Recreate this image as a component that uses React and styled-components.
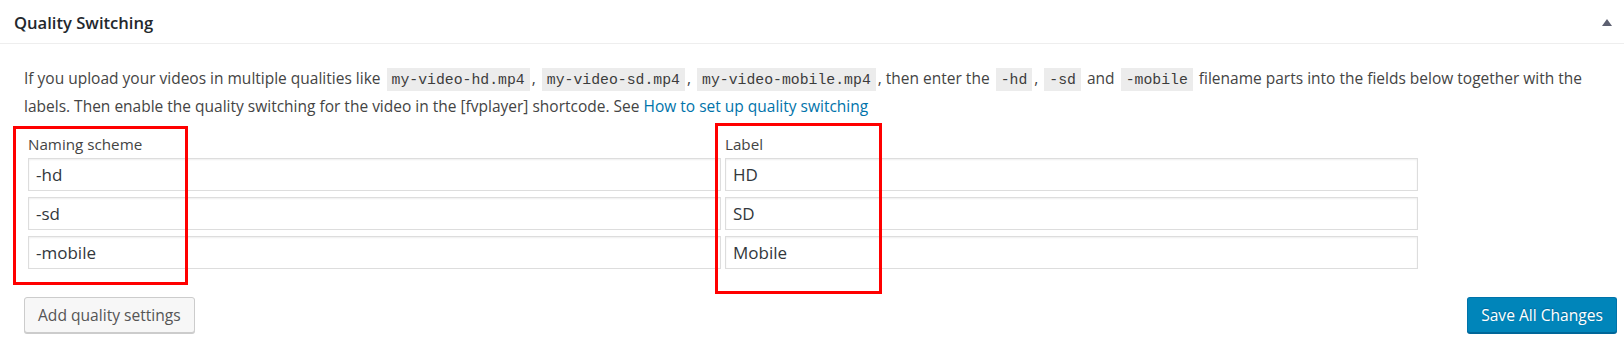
import React from "react";
import styled, { createGlobalStyle } from "styled-components";

const GlobalStyle = createGlobalStyle`
  html, body {
    margin: 0;
    padding: 0;
    background: #ffffff;
  }
  body {
    font-family: "Open Sans", "Noto Sans", sans-serif;
    color: #444;
  }
  * { box-sizing: border-box; }
`;

const Panel = styled.section`
  width: 1624px;
  height: 354px;
  background: #fff;
`;

const Header = styled.header`
  height: 44px;
  padding: 11px 12px 0 14px;
  border-bottom: 1px solid #eeeeee;
  display: flex;
  justify-content: space-between;
  align-items: flex-start;
`;

const Title = styled.h2`
  margin: 0;
  font-size: 16.6px;
  line-height: 24px;
  font-weight: 600;
  color: #23282d;
`;

const Toggle = styled.svg`
  margin-top: 8px;
  display: block;
`;

const Inside = styled.div`
  padding: 21px 7px 0 24px;
`;

const Description = styled.p`
  margin: 0;
  font-size: 15.5px;
  line-height: 26px;
  color: #444;
`;

const Code = styled.code`
  font-family: "Liberation Mono", "DejaVu Sans Mono", monospace;
  font-size: 14.8px;
  padding: 4px 5px 3px;
  margin: 0 2px;
  background: rgba(0, 0, 0, 0.075);
  color: #3c3c3c;
`;

const Link = styled.a`
  color: #0073aa;
  text-decoration: none;
`;

const Fields = styled.div`
  display: flex;
  gap: 4px;
  margin: 15px 0 0 4px;
`;

const Column = styled.div`
  position: relative;
  width: 693px;
  display: flex;
  flex-direction: column;
  gap: 6px;
`;

const FieldLabel = styled.div`
  font-size: 15.2px;
  line-height: 20px;
  color: #444;
  margin-bottom: -2px;
`;

const TextInput = styled.input`
  display: block;
  width: 693px;
  height: 33px;
  margin: 0;
  padding: 0 7px;
  border: 1px solid #dddddd;
  box-shadow: inset 0 1px 2px rgba(0, 0, 0, 0.07);
  background: #fff;
  color: #32373c;
  font-family: "Open Sans", "Noto Sans", sans-serif;
  font-size: 17px;
  outline: none;
`;

const Highlight = styled.div`
  position: absolute;
  left: ${(p) => p.$left}px;
  top: ${(p) => p.$top}px;
  width: ${(p) => p.$w}px;
  height: ${(p) => p.$h}px;
  border: 3px solid #ff0000;
  pointer-events: none;
`;

const Actions = styled.div`
  display: flex;
  justify-content: space-between;
  align-items: center;
  margin-top: 28px;
`;

const Button = styled.button`
  height: 36px;
  padding: 0 13px;
  border-radius: 3px;
  font-family: "Open Sans", "Noto Sans", sans-serif;
  font-size: 15.6px;
  line-height: 34px;
  cursor: pointer;
  border: 1px solid ${(p) => (p.$primary ? "#0073aa" : "#cccccc")};
  border-bottom-color: ${(p) => (p.$primary ? "#006799" : "#cccccc")};
  background: ${(p) => (p.$primary ? "#0085ba" : "#f7f7f7")};
  color: ${(p) => (p.$primary ? "#ffffff" : "#555555")};
  box-shadow: 0 1px 0 ${(p) => (p.$primary ? "#006799" : "#cccccc")};
  ${(p) => (p.$primary ? "text-shadow: 0 -1px 1px #006799;" : "")}
`;

export default function App() {
  return (
    <>
      <GlobalStyle />
      <Panel>
        <Header>
          <Title>Quality Switching</Title>
          <Toggle width="10" height="7" viewBox="0 0 10 7">
            <polygon points="5,0 10,7 0,7" fill="#5d6071" />
          </Toggle>
        </Header>
        <Inside>
          <Description>
            If you upload your videos in multiple qualities like <Code>my-video-hd.mp4</Code>,{" "}
            <Code>my-video-sd.mp4</Code>, <Code>my-video-mobile.mp4</Code>, then enter the{" "}
            <Code>-hd</Code>, <Code>-sd</Code> and <Code>-mobile</Code> filename parts into the
            fields below together with the labels. Then enable the quality switching for the
            video in the [fvplayer] shortcode. See{" "}
            <Link href="#">How to set up quality switching</Link>
          </Description>
          <Fields>
            <Column>
              <FieldLabel>Naming scheme</FieldLabel>
              <TextInput defaultValue="-hd" />
              <TextInput defaultValue="-sd" />
              <TextInput defaultValue="-mobile" />
              <Highlight $left={-15} $top={-8} $w={175} $h={159} />
            </Column>
            <Column>
              <FieldLabel>Label</FieldLabel>
              <TextInput defaultValue="HD" />
              <TextInput defaultValue="SD" />
              <TextInput defaultValue="Mobile" />
              <Highlight $left={-10} $top={-11} $w={167} $h={171} />
            </Column>
          </Fields>
          <Actions>
            <Button type="button">Add quality settings</Button>
            <Button type="button" $primary>
              Save All Changes
            </Button>
          </Actions>
        </Inside>
      </Panel>
    </>
  );
}
